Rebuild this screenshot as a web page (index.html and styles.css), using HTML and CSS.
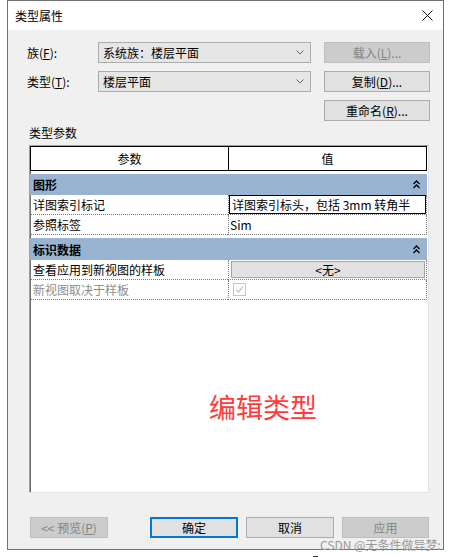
FILE: index.html
```html
<!DOCTYPE html>
<html lang="zh-CN">

<head>
  <meta charset="UTF-8">
  <title>类型属性</title>
  <link rel="stylesheet" href="styles.css">
</head>

<body>
  <div class="dialog">
    <div class="titlebar">
      <span class="title">类型属性</span>
      <svg class="close" width="11" height="11" viewBox="0 0 11 11">
        <path d="M0.5 0.5 L10.5 10.5 M10.5 0.5 L0.5 10.5" stroke="#111" stroke-width="1" fill="none" />
      </svg>
    </div>

    <div class="body">
      <div class="form">
        <span class="label">族(<u>F</u>):</span>
        <div class="select">
          <span>系统族：楼层平面</span>
          <svg width="8" height="5" viewBox="0 0 8 5"><path d="M0.5 0.5 L4 4 L7.5 0.5" stroke="#666" fill="none" /></svg>
        </div>
        <div class="btn disabled">载入(<u>L</u>)...</div>

        <span class="label">类型(<u>T</u>):</span>
        <div class="select">
          <span>楼层平面</span>
          <svg width="8" height="5" viewBox="0 0 8 5"><path d="M0.5 0.5 L4 4 L7.5 0.5" stroke="#666" fill="none" /></svg>
        </div>
        <div class="btn">复制(<u>D</u>)...</div>

        <div class="btn rename">重命名(<u>R</u>)...</div>
      </div>

      <div class="section-label">类型参数</div>

      <div class="grid-box">
        <div class="grid-head">
          <div class="cell">参数</div>
          <div class="cell">值</div>
        </div>

        <div class="group">
          <span>图形</span>
          <svg width="7" height="9" viewBox="0 0 7 9"><path d="M0.5 4 L3.5 1 L6.5 4 M0.5 8 L3.5 5 L6.5 8" stroke="#000" stroke-width="1.3" fill="none" /></svg>
        </div>
        <div class="row">
          <div class="cell">详图索引标记</div>
          <div class="cell"><div class="edit">详图索引标头，包括 3mm 转角半</div></div>
        </div>
        <div class="row">
          <div class="cell">参照标签</div>
          <div class="cell">Sim</div>
        </div>

        <div class="group second">
          <span>标识数据</span>
          <svg width="7" height="9" viewBox="0 0 7 9"><path d="M0.5 4 L3.5 1 L6.5 4 M0.5 8 L3.5 5 L6.5 8" stroke="#000" stroke-width="1.3" fill="none" /></svg>
        </div>
        <div class="row">
          <div class="cell">查看应用到新视图的样板</div>
          <div class="cell"><div class="cell-btn">&lt;无&gt;</div></div>
        </div>
        <div class="row">
          <div class="cell muted">新视图取决于样板</div>
          <div class="cell">
            <svg class="check" width="13" height="13" viewBox="0 0 13 13">
              <rect x="0.5" y="0.5" width="12" height="12" fill="#fff" stroke="#c4c4c4" />
              <path d="M3 6.5 L5.5 9 L10 3.5" stroke="#c4c4c4" stroke-width="1.2" fill="none" />
            </svg>
          </div>
        </div>

        <div class="note">编辑类型</div>
      </div>

      <div class="footer">
        <div class="btn disabled preview">&lt;&lt; 预览(<u>P</u>)</div>
        <div class="btn default">确定</div>
        <div class="btn">取消</div>
        <div class="btn disabled">应用</div>
      </div>
    </div>
  </div>

  <div class="watermark">CSDN @无条件做异梦:</div>
  <div class="dash"></div>
</body>

</html>
```

FILE: styles.css
```css
* {
  box-sizing: border-box;
}

body {
  position: relative;
  margin: 0;
  width: 450px;
  height: 557px;
  background-color: #fff;
  font-family: "Noto Sans CJK SC", "Microsoft YaHei", sans-serif;
  font-size: 12px;
  color: #000;
}

u {
  text-decoration: underline;
  text-underline-offset: 1px;
}

.dialog {
  margin-left: 7px;
  width: 437px;
  height: 550px;
  border: 1px solid #717171;
  display: flex;
  flex-direction: column;
}

.titlebar {
  height: 29px;
  flex: none;
  display: flex;
  align-items: center;
  justify-content: space-between;
  padding: 0 10px 0 7px;
  background-color: #fff;
}

.title {
  font-size: 12px;
}

.body {
  flex: 1;
  background-color: #f0f0f0;
  padding-top: 12px;
}

/* 上方表单 */
.form {
  display: grid;
  grid-template-columns: 58px 213px 106px;
  grid-auto-rows: 21px;
  column-gap: 13px;
  row-gap: 8px;
  padding-left: 19px;
}

.label {
  line-height: 21px;
}

.select {
  display: flex;
  align-items: center;
  justify-content: space-between;
  padding: 0 6px 0 4px;
  background-color: #e6e6e6;
  border: 1px solid #acacac;
}

.btn {
  height: 21px;
  line-height: 19px;
  text-align: center;
  background-color: #e1e1e1;
  border: 1px solid #adadad;
}

.btn.disabled {
  background-color: #cccccc;
  border-color: #bfbfbf;
  color: #838383;
}

.btn.rename {
  grid-column: 3;
}

.section-label {
  margin: 3px 0 3px 21px;
  height: 18px;
  line-height: 18px;
}

/* 参数表格 */
.grid-box {
  position: relative;
  margin-left: 21px;
  width: 400px;
  height: 348px;
  padding: 1px 1px 0 0;
  background-color: #fff;
  border-top: 1px solid #a0a0a0;
  border-left: 1px solid #a0a0a0;
  border-right: 1px solid #e3e3e3;
  border-bottom: 1px solid #e3e3e3;
  box-shadow: inset 1px 0 0 #696969;
}

.grid-head {
  display: grid;
  grid-template-columns: 198px 1fr;
  height: 25px;
  border: 1px solid #000;
  margin-top: -1px;
}

.grid-head .cell {
  line-height: 23px;
  text-align: center;
}

.grid-head .cell:first-child {
  border-right: 1px solid #000;
}

.group {
  display: flex;
  align-items: center;
  justify-content: space-between;
  margin-top: 3px;
  height: 21px;
  padding: 0 7px 0 3px;
  background-color: #99b4d1;
  font-weight: bold;
}

.group.second {
  margin-top: 3px;
  height: 22px;
}

.row {
  display: grid;
  grid-template-columns: 198px 1fr;
  height: 20px;
}

.row .cell {
  line-height: 19px;
  padding-left: 2px;
  border-bottom: 1px dotted #7a7a7a;
  border-left: 1px dotted #7a7a7a;
  white-space: nowrap;
  overflow: hidden;
}

.row .cell:last-child {
  border-right: 1px dotted #7a7a7a;
  padding-left: 1px;
}

.row .cell.muted {
  color: #8d8d8d;
}

.edit {
  height: 19px;
  margin-left: -1px;
  padding-left: 2px;
  border: 1px solid #000;
  line-height: 17px;
  overflow: hidden;
  white-space: nowrap;
}

.cell-btn {
  height: 17px;
  margin: 1px 1px 0 1px;
  line-height: 15px;
  text-align: center;
  background-color: #e1e1e1;
  border: 1px solid #a5a5a5;
}

.check {
  display: block;
  margin: 3px 0 0 3px;
}

.note {
  position: absolute;
  left: 179px;
  top: 246px;
  font-size: 27px;
  line-height: 30px;
  color: #ff3b3b;
}

/* 底部按钮 */
.footer {
  display: flex;
  gap: 8px;
  margin-top: 24px;
  padding-left: 22px;
}

.footer .btn {
  width: 88px;
}

.footer .btn.preview {
  width: 78px;
  margin-right: 34px;
}

.footer .btn:last-child {
  width: 87px;
}

.btn.default {
  border: 2px solid #0078d7;
  line-height: 17px;
}

.watermark {
  position: absolute;
  left: 320px;
  top: 538px;
  font-size: 12px;
  line-height: 13px;
  white-space: nowrap;
  color: #9a9a9a;
}

.dash {
  position: absolute;
  left: 313px;
  top: 556px;
  width: 5px;
  height: 1px;
  background-color: #333;
}
```
